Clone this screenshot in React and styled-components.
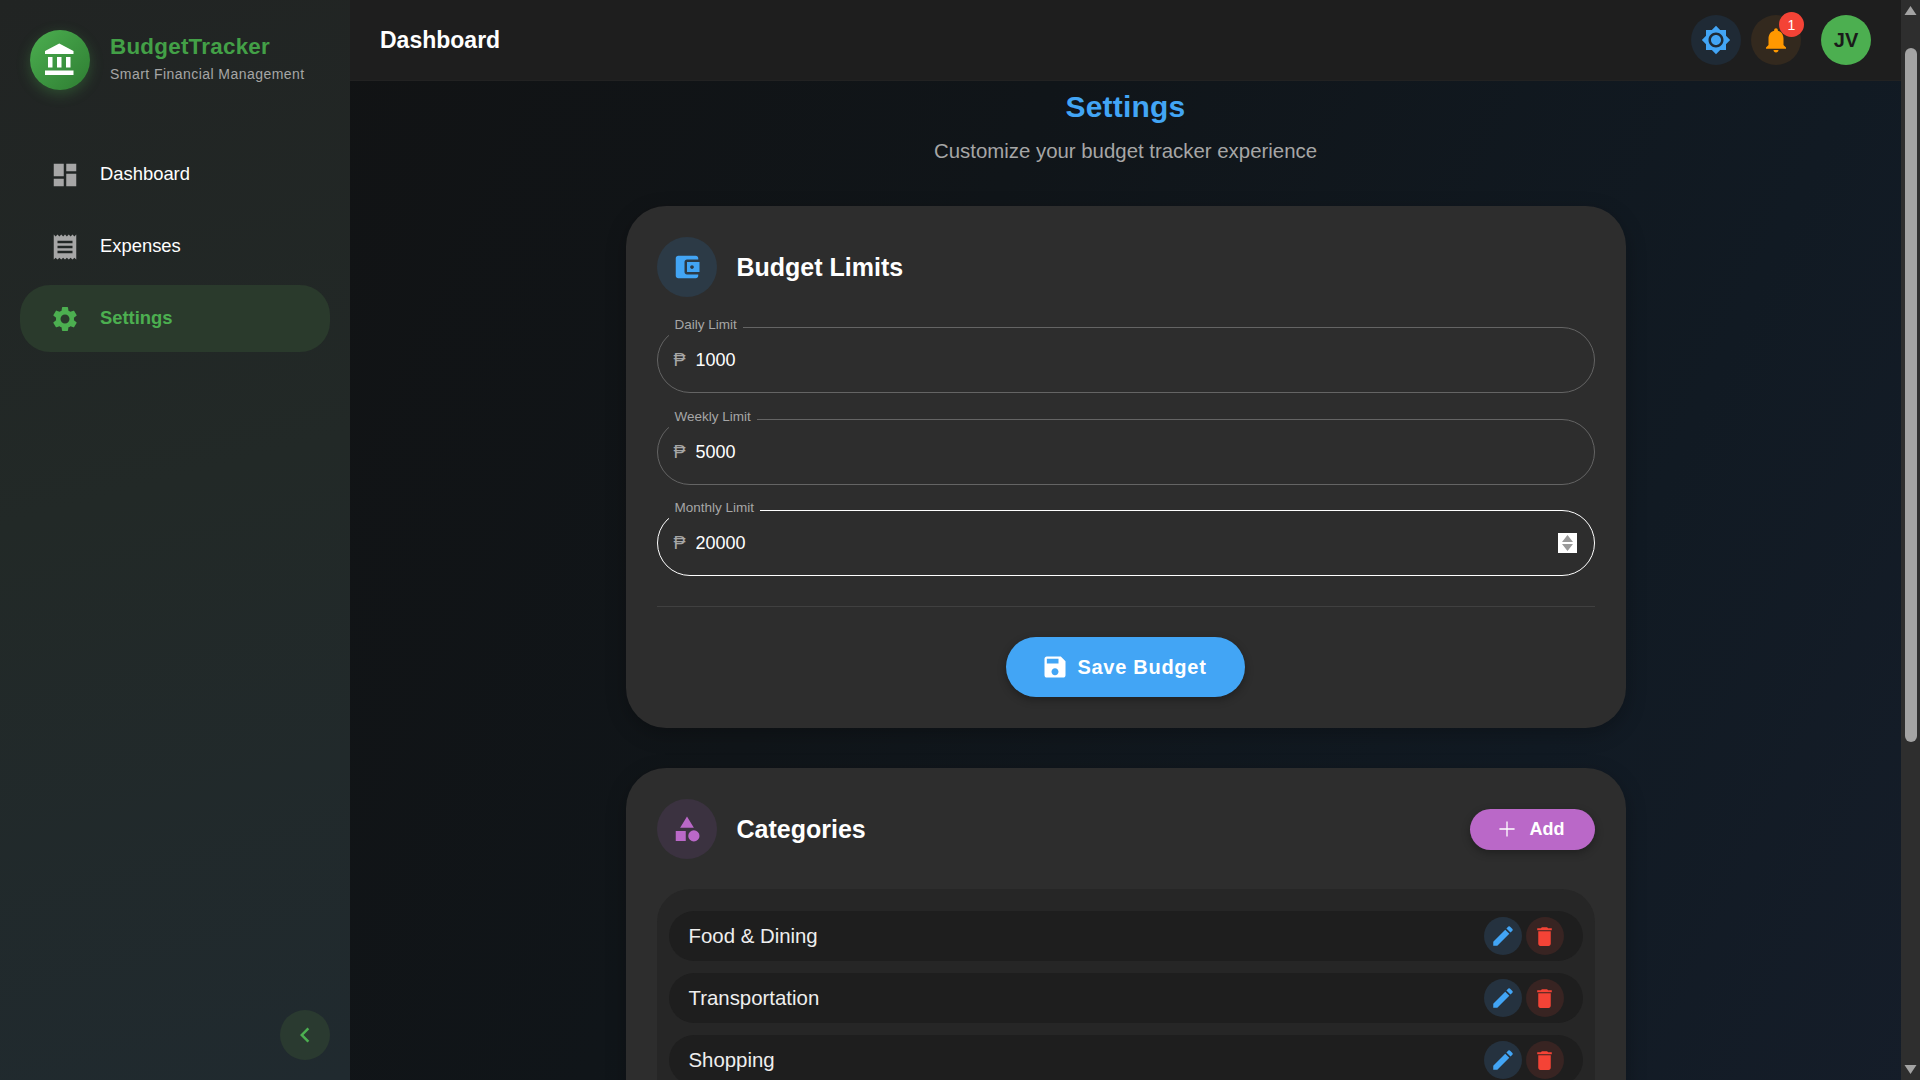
import React, { useLayoutEffect, useRef } from "react";
import styled, { createGlobalStyle } from "styled-components";

const paths = {
  bank: "M4 10v7h3v-7zm6 0v7h3v-7zM2 22h19v-3H2zm14-12v7h3v-7zm-4.5-9L2 6v2h19V6z",
  dashboard: "M3 13h8V3H3zm0 8h8v-6H3zm10 0h8V11h-8zm0-18v6h8V3z",
  receipt:
    "M18 17H6v-2h12zm0-4H6v-2h12zm0-4H6V7h12zM3 22l1.5-1.5L6 22l1.5-1.5L9 22l1.5-1.5L12 22l1.5-1.5L15 22l1.5-1.5L18 22l1.5-1.5L21 22V2l-1.5 1.5L18 2l-1.5 1.5L15 2l-1.5 1.5L12 2l-1.5 1.5L9 2 7.5 3.5 6 2 4.5 3.5 3 2z",
  settings:
    "M19.14 12.94c.04-.3.06-.61.06-.94 0-.32-.02-.64-.07-.94l2.03-1.58c.18-.14.23-.41.12-.61l-1.92-3.32c-.12-.22-.37-.29-.59-.22l-2.39.96c-.5-.38-1.03-.7-1.62-.94l-.36-2.54c-.04-.24-.24-.41-.48-.41h-3.84c-.24 0-.43.17-.47.41l-.36 2.54c-.59.24-1.13.57-1.62.94l-2.39-.96c-.22-.08-.47 0-.59.22L2.74 8.87c-.12.21-.08.47.12.61l2.03 1.58c-.05.3-.09.63-.09.94s.02.64.07.94l-2.03 1.58c-.18.14-.23.41-.12.61l1.92 3.32c.12.22.37.29.59.22l2.39-.96c.5.38 1.03.7 1.62.94l.36 2.54c.05.24.24.41.48.41h3.84c.24 0 .44-.17.47-.41l.36-2.54c.59-.24 1.13-.56 1.62-.94l2.39.96c.22.08.47 0 .59-.22l1.92-3.32c.12-.22.07-.47-.12-.61zM12 15.6c-1.98 0-3.6-1.62-3.6-3.6s1.62-3.6 3.6-3.6 3.6 1.62 3.6 3.6-1.62 3.6-3.6 3.6",
  brightness:
    "M20 8.69V4h-4.69L12 .69 8.69 4H4v4.69L.69 12 4 15.31V20h4.69L12 23.31 15.31 20H20v-4.69L23.31 12zM12 18c-3.31 0-6-2.69-6-6s2.69-6 6-6 6 2.69 6 6-2.69 6-6 6m0-10c-2.21 0-4 1.79-4 4s1.79 4 4 4 4-1.79 4-4-1.79-4-4-4",
  bell: "M12 22c1.1 0 2-.9 2-2h-4c0 1.1.89 2 2 2m6-6v-5c0-3.07-1.64-5.64-4.5-6.32V4c0-.83-.67-1.5-1.5-1.5s-1.5.67-1.5 1.5v.68C7.63 5.36 6 7.92 6 11v5l-2 2v1h16v-1z",
  wallet:
    "M21 18v1c0 1.1-.9 2-2 2H5c-1.11 0-2-.9-2-2V5c0-1.1.89-2 2-2h14c1.1 0 2 .9 2 2v1h-9c-1.11 0-2 .9-2 2v8c0 1.1.89 2 2 2zm-9-2h10V8H12zm4-2.5c-.83 0-1.5-.67-1.5-1.5s.67-1.5 1.5-1.5 1.5.67 1.5 1.5-.67 1.5-1.5 1.5",
  save: "M17 3H5c-1.11 0-2 .9-2 2v14c0 1.1.89 2 2 2h14c1.1 0 2-.9 2-2V7zm-5 16c-1.66 0-3-1.34-3-3s1.34-3 3-3 3 1.34 3 3-1.34 3-3 3m3-10H5V5h10z",
  category: "m12 2-5.5 9h11zM17.5 13a4.5 4.5 0 1 0 0 9 4.5 4.5 0 0 0 0-9zM3 13.5h8v8H3z",
  add: "M19 12.6h-6.4V19h-1.2v-6.4H5v-1.2h6.4V5h1.200v6.400H19z",
  edit: "M3 17.25V21h3.75L17.81 9.94l-3.75-3.75zM20.71 7.04c.39-.39.39-1.02 0-1.41l-2.34-2.34a.9959.9959 0 0 0-1.41 0l-1.83 1.83 3.75 3.75z",
  trash: "M6 19c0 1.1.9 2 2 2h8c1.1 0 2-.9 2-2V7H6zM19 4h-3.5l-1-1h-5l-1 1H5v2h14z",
  chevron: "M15.41 7.41 14 6l-6 6 6 6 1.41-1.41L10.83 12z",
};

const navItems = [
  { label: "Dashboard", icon: "dashboard" },
  { label: "Expenses", icon: "receipt" },
  { label: "Settings", icon: "settings", active: true },
];

const limits = [
  { label: "Daily Limit", value: 1000 },
  { label: "Weekly Limit", value: 5000 },
  { label: "Monthly Limit", value: 20000, active: true },
];

const categories = [
  "Food & Dining",
  "Transportation",
  "Shopping",
  "Bills & Utilities",
  "Entertainment",
  "Healthcare",
  "Education",
  "Travel",
  "Others",
];

const Icon = ({ name, size = 24, color = "currentColor" }) => (
  <IconSvg viewBox="0 0 24 24" $size={size} fill={color}>
    <path d={paths[name]} />
  </IconSvg>
);

const App = () => {
  const scroller = useRef(null);

  // the reference was taken a little way down the page
  useLayoutEffect(() => {
    scroller.current.scrollTop = 45;
  }, []);

  return (
    <Shell>
      <GlobalStyle />
      <Sidebar>
        <Brand>
          <BrandMark>
            <Icon name="bank" size={36} color="#fff" />
          </BrandMark>
          <BrandText>
            <BrandName>BudgetTracker</BrandName>
            <BrandTag>Smart Financial Management</BrandTag>
          </BrandText>
        </Brand>
        <Nav>
          {navItems.map((item) => (
            <NavItem key={item.label} $active={item.active}>
              <Icon
                name={item.icon}
                size={30}
                color={item.active ? "#4caf50" : "#a6a6a6"}
              />
              <NavLabel>{item.label}</NavLabel>
            </NavItem>
          ))}
        </Nav>
        <CollapseButton>
          <Icon name="chevron" size={30} color="#4caf50" />
        </CollapseButton>
      </Sidebar>

      <Scroller ref={scroller}>
        <TopBar>
          <PageName>Dashboard</PageName>
          <TopActions>
            <RoundButton $bg="#1f2a35">
              <Icon name="brightness" size={30} color="#42a5f5" />
            </RoundButton>
            <RoundButton $bg="#33291e">
              <Icon name="bell" size={30} color="#ff9800" />
              <Badge>1</Badge>
            </RoundButton>
            <Avatar>JV</Avatar>
          </TopActions>
        </TopBar>

        <Content>
          <Heading>Settings</Heading>
          <SubHeading>Customize your budget tracker experience</SubHeading>

          <Card>
            <CardHeader>
              <CardTitleGroup>
                <CardBadge $bg="#2c3a46">
                  <Icon name="wallet" size={30} color="#42a5f5" />
                </CardBadge>
                <CardTitle>Budget Limits</CardTitle>
              </CardTitleGroup>
            </CardHeader>

            <Fields>
              {limits.map((limit) => (
                <Field key={limit.label} $active={limit.active}>
                  <FieldLabel>{limit.label}</FieldLabel>
                  <FieldRow>
                    <Peso>₱</Peso>
                    <FieldInput
                      type="number"
                      defaultValue={limit.value}
                      aria-label={limit.label}
                    />
                    {limit.active && (
                      <Spinner viewBox="0 0 19 20">
                        <rect width="19" height="20" fill="#fff" />
                        <path d="M9.500 2 15 9H4zM4 11h11l-5.500 7z" fill="#9a9a9a" />
                      </Spinner>
                    )}
                  </FieldRow>
                </Field>
              ))}
            </Fields>

            <Divider />

            <SaveRow>
              <SaveButton>
                <Icon name="save" size={28} color="#fff" />
                Save Budget
              </SaveButton>
            </SaveRow>
          </Card>

          <Card>
            <CardHeader>
              <CardTitleGroup>
                <CardBadge $bg="#3b3240">
                  <Icon name="category" size={30} color="#ba68c8" />
                </CardBadge>
                <CardTitle>Categories</CardTitle>
              </CardTitleGroup>
              <AddButton>
                <Icon name="add" size={26} color="#fff" />
                Add
              </AddButton>
            </CardHeader>

            <CategoryList>
              {categories.map((name) => (
                <CategoryRow key={name}>
                  <CategoryName>{name}</CategoryName>
                  <RowActions>
                    <RowButton $bg="#25323f">
                      <Icon name="edit" size={26} color="#42a5f5" />
                    </RowButton>
                    <RowButton $bg="#382422">
                      <Icon name="trash" size={25} color="#f44336" />
                    </RowButton>
                  </RowActions>
                </CategoryRow>
              ))}
            </CategoryList>
          </Card>
        </Content>
      </Scroller>

      <ScrollRail>
        <RailArrow viewBox="0 0 19 19">
          <path d="M9.500 6 15.500 15H3.500z" />
        </RailArrow>
        <RailTrack>
          <RailThumb />
        </RailTrack>
        <RailArrow viewBox="0 0 19 19">
          <path d="M3.500 4h12l-6 9z" />
        </RailArrow>
      </ScrollRail>
    </Shell>
  );
};

export default App;

const GlobalStyle = createGlobalStyle`
  body {
    margin: 0;
    font-family: "Liberation Sans", Arial, sans-serif;
    color: #fff;
    overflow: hidden;
  }
  * {
    box-sizing: border-box;
  }
`;

const IconSvg = styled.svg`
  display: block;
  flex: none;
  width: ${(p) => p.$size}px;
  height: ${(p) => p.$size}px;
`;

const Shell = styled.div`
  display: flex;
  height: 100vh;
  background: linear-gradient(115deg, #121212 0%, #101519 45%, #111a23 78%, #151d29 100%);
`;

const Sidebar = styled.aside`
  flex: none;
  width: 350px;
  display: flex;
  flex-direction: column;
  padding: 30px 20px 20px;
  background: linear-gradient(165deg, #212423 0%, #222927 45%, #202a2f 100%);
`;

const Brand = styled.div`
  display: flex;
  align-items: center;
  gap: 20px;
  padding-left: 10px;
  margin-bottom: 51px;
`;

const BrandMark = styled.div`
  width: 60px;
  height: 60px;
  border-radius: 50%;
  display: flex;
  align-items: center;
  justify-content: center;
  background: linear-gradient(135deg, #4caf50, #2e7d32);
  box-shadow: 0 4px 14px rgba(76, 175, 80, 0.3);
`;

const BrandText = styled.div`
  padding-bottom: 6px;
`;

const BrandName = styled.div`
  font-size: 22.4px;
  font-weight: 700;
  line-height: 30px;
  letter-spacing: 0.25px;
  color: #43a047;
`;

const BrandTag = styled.div`
  margin-top: 3px;
  font-size: 14px;
  line-height: 18px;
  letter-spacing: 0.45px;
  color: #a6a6a6;
`;

const Nav = styled.nav`
  flex: 1;
  display: flex;
  flex-direction: column;
  gap: 5px;
`;

const NavItem = styled.a`
  display: flex;
  align-items: center;
  gap: 20px;
  height: 67px;
  padding-left: 30px;
  border-radius: 30px;
  font-size: 18.4px;
  font-weight: ${(p) => (p.$active ? 700 : 400)};
  color: ${(p) => (p.$active ? "#4caf50" : "#fff")};
  background: ${(p) => (p.$active ? "#2a3a2c" : "transparent")};
`;

const NavLabel = styled.span`
  padding-bottom: 2px;
`;

const CollapseButton = styled.button`
  align-self: flex-end;
  width: 50px;
  height: 50px;
  padding: 0;
  border: 0;
  border-radius: 50%;
  display: flex;
  align-items: center;
  justify-content: center;
  background: #2a3a30;
`;

const Scroller = styled.main`
  flex: 1;
  min-width: 0;
  height: 100vh;
  overflow-y: scroll;
  scrollbar-width: none;
`;

const ScrollRail = styled.div`
  flex: none;
  width: 19px;
  height: 100vh;
  display: flex;
  flex-direction: column;
  background: #2e2e2e;
`;

const RailArrow = styled.svg`
  display: block;
  flex: none;
  width: 19px;
  height: 19px;
  fill: #a3a3a3;
`;

const RailTrack = styled.div`
  flex: 1;
  padding: 29px 3px 0 4px;
`;

const RailThumb = styled.div`
  height: 694px;
  border-radius: 6px;
  background: #a3a3a3;
`;

const TopBar = styled.header`
  position: sticky;
  top: 0;
  z-index: 2;
  height: 81px;
  display: flex;
  align-items: center;
  justify-content: space-between;
  padding: 0 30px;
  background: #1e1e1e;
  border-bottom: 1px solid #222;
`;

const PageName = styled.div`
  font-size: 23px;
  font-weight: 700;
  color: #fff;
`;

const TopActions = styled.div`
  display: flex;
  align-items: center;
  gap: 10px;
`;

const RoundButton = styled.button`
  position: relative;
  width: 50px;
  height: 50px;
  padding: 0;
  border: 0;
  border-radius: 50%;
  display: flex;
  align-items: center;
  justify-content: center;
  background: ${(p) => p.$bg};
`;

const Badge = styled.span`
  position: absolute;
  top: -3px;
  right: -3px;
  width: 25px;
  height: 25px;
  border-radius: 50%;
  display: flex;
  align-items: center;
  justify-content: center;
  background: #f44336;
  color: #fff;
  font-size: 14px;
`;

const Avatar = styled.div`
  width: 50px;
  height: 50px;
  margin-left: 10px;
  border-radius: 50%;
  display: flex;
  align-items: center;
  justify-content: center;
  background: #4caf50;
  color: #1a1a1a;
  font-size: 20px;
  font-weight: 600;
`;

const Content = styled.div`
  display: flex;
  flex-direction: column;
  align-items: center;
  padding: 53px 0 66px;
`;

const Heading = styled.h1`
  margin: 0;
  font-size: 30px;
  line-height: 36px;
  font-weight: 700;
  letter-spacing: 0.2px;
  color: #42a5f5;
`;

const SubHeading = styled.p`
  margin: 14px 0 0;
  font-size: 20.4px;
  line-height: 24px;
  color: #a6a6a6;
`;

const Card = styled.section`
  width: 1000px;
  margin-top: 40px;
  padding: 31px;
  border-radius: 40px;
  background: #2d2d2d;
  box-shadow: 0 6px 20px rgba(0, 0, 0, 0.25);

  ${SubHeading} + & {
    margin-top: 43px;
  }
`;

const CardHeader = styled.div`
  display: flex;
  align-items: center;
  justify-content: space-between;
`;

const CardTitleGroup = styled.div`
  display: flex;
  align-items: center;
  gap: 20px;
`;

const CardBadge = styled.div`
  width: 60px;
  height: 60px;
  border-radius: 50%;
  display: flex;
  align-items: center;
  justify-content: center;
  background: ${(p) => p.$bg};
`;

const CardTitle = styled.h2`
  margin: 0;
  font-size: 25px;
  font-weight: 700;
  color: #fff;
`;

const Fields = styled.div`
  display: flex;
  flex-direction: column;
  gap: 15.5px;
  margin-top: 20px;
`;

const Field = styled.fieldset`
  margin: 0;
  min-width: 0;
  padding: 0 17px 9px 16px;
  border: 1px solid ${(p) => (p.$active ? "#fff" : "#646464")};
  border-radius: 33px;
`;

const FieldLabel = styled.legend`
  margin-left: -5px;
  padding: 0 6px 6px;
  font-size: 13.5px;
  line-height: 15px;
  color: #a6a6a6;
`;

const FieldRow = styled.div`
  display: flex;
  align-items: center;
  height: 45px;
`;

const Peso = styled.span`
  width: 22px;
  font-size: 18px;
  color: #a6a6a6;
`;

const FieldInput = styled.input`
  flex: 1;
  min-width: 0;
  padding: 0;
  border: 0;
  outline: 0;
  background: transparent;
  color: #fff;
  font-family: inherit;
  font-size: 18px;
  appearance: textfield;

  &::-webkit-inner-spin-button {
    appearance: none;
  }
`;

const Spinner = styled.svg`
  display: block;
  flex: none;
  width: 19px;
  height: 20px;
  margin-top: -2px;
`;

const Divider = styled.hr`
  margin: 30px 0;
  border: 0;
  border-top: 1px solid #404040;
`;

const SaveRow = styled.div`
  display: flex;
  justify-content: center;
`;

const SaveButton = styled.button`
  display: flex;
  align-items: center;
  justify-content: center;
  gap: 8px;
  width: 239px;
  height: 60px;
  padding: 0 3px 0 0;
  border: 0;
  border-radius: 30px;
  background: #42a5f5;
  box-shadow: 0 3px 8px rgba(0, 0, 0, 0.3);
  color: #fff;
  font-family: inherit;
  font-size: 20px;
  font-weight: 700;
  letter-spacing: 0.72px;
`;

const AddButton = styled.button`
  display: flex;
  align-items: center;
  justify-content: center;
  gap: 10px;
  width: 125px;
  height: 41px;
  padding: 0 6px 0 0;
  border: 0;
  border-radius: 21px;
  background: #ba68c8;
  box-shadow: 0 3px 8px rgba(0, 0, 0, 0.3);
  color: #fff;
  font-family: inherit;
  font-size: 18px;
  font-weight: 700;
`;

const CategoryList = styled.div`
  display: flex;
  flex-direction: column;
  gap: 12px;
  margin-top: 30px;
  padding: 22px 12px;
  border-radius: 33px;
  background: #262626;
`;

const CategoryRow = styled.div`
  display: flex;
  align-items: center;
  justify-content: space-between;
  height: 50px;
  padding: 0 19px 0 20px;
  border-radius: 25px;
  background: #1e1e1e;
`;

const CategoryName = styled.span`
  font-size: 20.4px;
  color: #eee;
`;

const RowActions = styled.div`
  display: flex;
  gap: 4px;
`;

const RowButton = styled.button`
  width: 38px;
  height: 38px;
  padding: 0;
  border: 0;
  border-radius: 50%;
  display: flex;
  align-items: center;
  justify-content: center;
  background: ${(p) => p.$bg};
`;
